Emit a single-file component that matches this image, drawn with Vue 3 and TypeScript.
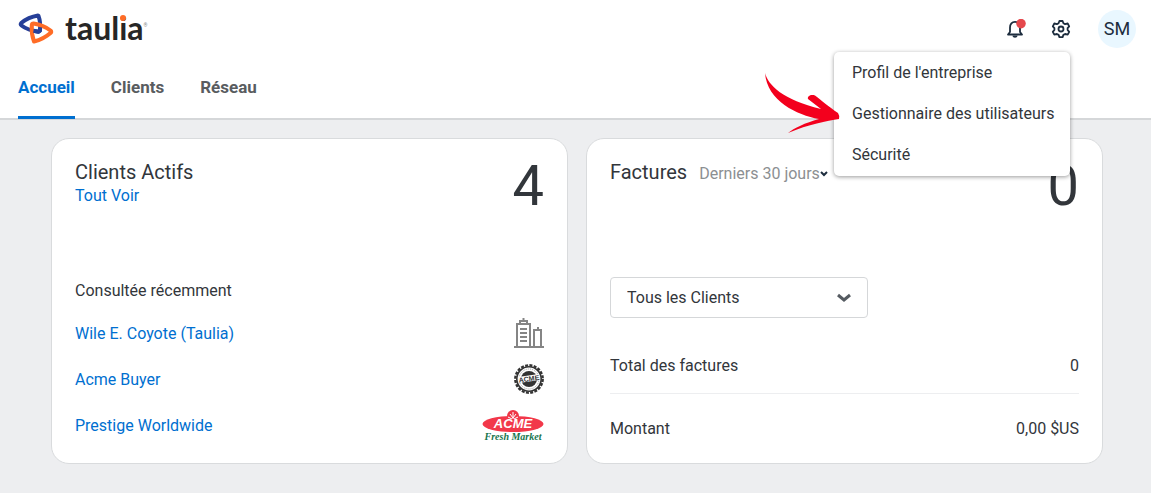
<script setup lang="ts">
import { ref } from 'vue'

interface Row { label: string; value: string }

const tabs: string[] = ['Accueil', 'Clients', 'Réseau']
const active = ref('Accueil')
const menu: string[] = ["Profil de l'entreprise", 'Gestionnaire des utilisateurs', 'Sécurité']
const recent: { name: string; logo: string }[] = [
  { name: 'Wile E. Coyote (Taulia)', logo: 'building' },
  { name: 'Acme Buyer', logo: 'seal' },
  { name: 'Prestige Worldwide', logo: 'market' },
]
const totals: Row[] = [
  { label: 'Total des factures', value: '0' },
  { label: 'Montant', value: '0,00 $US' },
]
</script>

<template>
  <div class="page">
    <header class="header">
      <div class="topbar">
        <a class="brand" href="#" aria-label="taulia">
          <svg width="36" height="32" viewBox="0 0 36 32" fill="none" stroke-width="4" stroke-linejoin="round">
            <path d="M20 2.500C14 3.500 8 6 3.200 10Q2 11.300 3.500 12.500C8 16 14 18 20.500 18.800L22 17.500C22.500 12 22 7 20.500 3Z" stroke="#263f98" />
            <path d="M13.800 12Q14 10.500 15.500 10.500C22 11.500 28 14 32.500 17.500Q34 19 32.500 20C28 24 22 27 16 28.500C14 23 13.300 18 13.800 12Z" stroke="#ff6c26" />
            <path d="M15.500 17.800 20.500 18.800 22 17.500V14.500" stroke="#263f98" />
          </svg>
          <span class="wordmark">taul<span class="dotted">i</span>a</span><span class="reg">®</span>
        </a>
        <div class="actions">
          <button class="icon-button" aria-label="Notifications">
            <svg width="20" height="20" viewBox="0 0 20 20" fill="none">
              <path d="M2 15.500 4 13V8.500C4 5 6 2.800 9 2.800S14 5 14 8.500V13L16 15.500Z" stroke="#1d2d3e" stroke-width="1.800" stroke-linejoin="round" />
              <path d="M6.500 16.500h5c0 3-5 3-5 0Z" fill="#1d2d3e" />
              <circle cx="15" cy="4.600" r="4.800" fill="#e5484d" />
            </svg>
          </button>
          <div class="settings">
            <button class="icon-button" aria-label="Paramètres" aria-haspopup="true" aria-expanded="true">
              <svg width="20" height="20" viewBox="0 0 20 20" fill="none" stroke="#1d2d3e" stroke-width="1.800" stroke-linejoin="round">
                <path d="M8.400 2h3.200l.8 2.200 1.700.9 2.600-.6 1.500 2.800-1.600 1.900v1.700l1.600 1.900-1.500 2.800-2.600-.6-1.700.9-.8 2.200H8.400l-.8-2.200-1.700-.9-2.600.6-1.500-2.800 1.600-1.900V9.200L1.800 7.300l1.500-2.800 2.600.6 1.700-.9Z" />
                <circle cx="10" cy="10" r="2.500" />
              </svg>
            </button>
            <nav class="menu" aria-label="Paramètres">
              <a v-for="item in menu" :key="item" href="#">{{ item }}</a>
              <svg class="pointer" width="80" height="64" viewBox="0 0 80 64" fill="#f3001d">
                <path d="M4 2C7 14 22 29 60 38L47 28C46 25 50 23 54 24.500C60 29 68 36 77 42Q79 45 78 48C66 50 48 53 27 62C33 57 44 52 58 48C36 44 6 30 4 2Z" />
              </svg>
            </nav>
          </div>
          <button class="avatar">SM</button>
        </div>
      </div>
      <nav class="tabs">
        <a v-for="tab in tabs" :key="tab" href="#" :class="{ active: tab === active }" @click.prevent="active = tab">{{ tab }}</a>
      </nav>
    </header>

    <main class="cards">
      <section class="card">
        <div class="card-head">
          <div>
            <h2>Clients Actifs</h2>
            <a class="all" href="#">Tout Voir</a>
          </div>
          <strong class="count">4</strong>
        </div>
        <h3>Consultée récemment</h3>
        <ul class="recent">
          <li v-for="client in recent" :key="client.name">
            <a href="#">{{ client.name }}</a>
            <svg v-if="client.logo === 'building'" width="30" height="32" viewBox="0 0 30 32" fill="none" stroke="#858585" stroke-width="2">
              <path d="M0 29h30M3 29V6h13v23M6 6V3h7v3M9.500 3V0M20 29V12h7v17M24 12V9M6 11h7M6 15h7M6 19h7M6 23h7" />
            </svg>
            <svg v-else-if="client.logo === 'seal'" width="30" height="32" viewBox="0 1 30 32">
              <circle cx="15" cy="16" r="13.700" fill="none" stroke="#333" stroke-width="2.400" stroke-dasharray="3 1.304" />
              <circle cx="15" cy="16" r="12.200" fill="#fff" stroke="#333" stroke-width="1.600" />
              <circle cx="15" cy="16" r="10" fill="none" stroke="#999" stroke-dasharray="1 1" />
              <circle cx="15" cy="16" r="8" fill="#333" />
              <rect x="4.500" y="12.500" width="21" height="6" fill="#fff" transform="rotate(-8 15 16)" />
              <text x="15" y="18.300" text-anchor="middle" class="seal-text" transform="rotate(-8 15 16)">ACME</text>
            </svg>
            <svg v-else width="62" height="32" viewBox="0 0 62 32">
              <circle cx="31" cy="6" r="6" fill="#ee3645" />
              <ellipse cx="31" cy="14" rx="30.500" ry="8" fill="#f2384a" />
              <path d="M31 9V2M31 8l-3-4M31 8l3-4M30 9l-4-2M32 9l4-2" stroke="#fff" />
              <text x="31" y="18" text-anchor="middle" class="acme-text">ACME</text>
              <text x="31" y="30" text-anchor="middle" class="fresh-text">Fresh Market</text>
            </svg>
          </li>
        </ul>
      </section>

      <section class="card">
        <div class="card-head">
          <div class="invoice-title">
            <h2>Factures</h2>
            <button class="period">Derniers 30 jours<svg width="8" height="6" viewBox="0 0 8 6" fill="none" stroke="#1d2d3e" stroke-width="2"><path d="m1 1 3 3 3-3" /></svg></button>
          </div>
          <strong class="count">0</strong>
        </div>
        <div class="select-box">
          <select aria-label="Clients"><option>Tous les Clients</option></select>
          <svg width="14" height="10" viewBox="0 0 14 10" fill="none" stroke="#555b61" stroke-width="3"><path d="m1 2 6 5 6-5" /></svg>
        </div>
        <dl class="totals">
          <div v-for="row in totals" :key="row.label"><dt>{{ row.label }}</dt><dd>{{ row.value }}</dd></div>
        </dl>
      </section>
    </main>
  </div>
</template>

<style>
body { margin: 0; background: #edeef0; }
</style>

<style scoped>
* { box-sizing: border-box; }
.page { min-height: 100vh; background: #edeef0; color: #32363b; font: 16px/20px Roboto, "Liberation Sans", sans-serif; }
a { color: #006fd0; text-decoration: none; }
button { padding: 0; border: 0; background: none; font: inherit; color: inherit; cursor: pointer; }
h2, h3, ul, dl, dd { margin: 0; padding: 0; font-weight: 400; }
.header { background: #fff; border-bottom: 2px solid #d5d7d9; }
.topbar { display: flex; justify-content: space-between; align-items: center; height: 58px; padding: 0 15px 0 18px; }
.brand { display: flex; align-items: center; color: #262626; }
.wordmark { margin-left: 11px; padding-bottom: 3px; font: 700 32px/36px Lato, sans-serif; }
.dotted { position: relative; }
.dotted::after { content: ""; position: absolute; left: 1px; top: 7px; width: 6px; height: 6px; border-radius: 50%; background: #ff6c26; }
.reg { margin-bottom: 8px; font-size: 5px; line-height: 8px; color: #888; }
.actions { display: flex; align-items: center; }
.icon-button { display: flex; width: 20px; height: 20px; }
.settings { position: relative; margin: 0 27px 0 25px; }
.menu { position: absolute; z-index: 2; top: 33px; right: 1px; width: 236px; padding: 0 18px 1px; background: #fff; border-radius: 5px; box-shadow: 0 1px 4px rgba(0, 0, 0, .4); }
.menu a { display: block; line-height: 41px; color: #32363b; white-space: nowrap; }
.pointer { position: absolute; left: -73px; top: 19px; }
.avatar { width: 38px; height: 38px; border-radius: 50%; background: #e9f7ff; color: #1d2d3e; font-size: 18px; }
.tabs { display: flex; gap: 36px; height: 60px; padding: 0 18px; font-size: 17px; font-weight: 700; }
.tabs a { height: 61px; padding-top: 19px; color: #595c5f; }
.tabs .active { color: #006fd0; border-bottom: 3px solid #006fd0; }
.cards { display: grid; grid-template-columns: 1fr 1fr; gap: 18px; padding: 18px 48px 29px 51px; }
.card { min-height: 326px; padding: 23px 23px 7px; background: #fff; border: 1px solid #d9dbdd; border-radius: 18px; }
.card-head { display: flex; justify-content: space-between; height: 115px; }
h2 { font-size: 20px; line-height: 20px; }
.all { line-height: 28px; }
.count { font-size: 56px; line-height: 48px; font-weight: 400; }
h3 { font-size: 16px; line-height: 28px; }
.recent { margin-top: 6px; list-style: none; }
.recent li { display: flex; justify-content: space-between; align-items: center; height: 46px; }
.seal-text { font: 700 7px "Liberation Sans", sans-serif; fill: #333; }
.acme-text { font: italic 700 13px "Liberation Sans", sans-serif; fill: #fff; }
.fresh-text { font: italic 700 10px "Liberation Serif", serif; fill: #16744d; }
.invoice-title { display: flex; align-items: flex-start; gap: 12px; }
.period { display: flex; align-items: center; height: 24px; color: #8c8f92; }
.select-box { display: flex; position: relative; width: 258px; align-items: center; }
.select-box select { width: 100%; height: 41px; padding: 0 16px; border: 1px solid #d5d7d9; border-radius: 4px; background: #fff; color: inherit; font: inherit; appearance: none; }
.select-box svg { position: absolute; right: 17px; pointer-events: none; }
.totals { margin-top: 17px; }
.totals div { display: flex; justify-content: space-between; padding: 21px 0 17px; }
.totals div + div { padding-top: 25px; border-top: 1px solid #edeef0; }
</style>
